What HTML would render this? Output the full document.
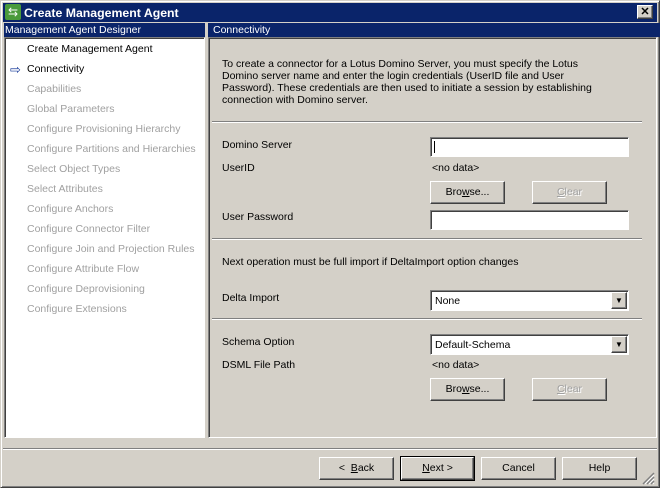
<!DOCTYPE html><html><head><style>
body{margin:0;width:660px;height:488px;background:#d4d0c8;font:10.5px "Liberation Sans",sans-serif;position:relative;overflow:hidden}
.a{position:absolute}
.hdr{background:#0a246a;color:#fff;height:14px;line-height:14px;font-size:10.5px}
.btn{position:absolute;background:#d4d0c8;border:1px solid;border-color:#fff #404040 #404040 #fff;box-shadow:inset -1px -1px #808080;text-align:center;line-height:20px;height:20px;box-sizing:border-box}
.in{position:absolute;background:#fff;border:1px solid;border-color:#808080 #fff #fff #808080;box-shadow:inset 1px 1px #404040;box-sizing:border-box}
.sep{position:absolute;height:0;border-top:1px solid #808080;border-bottom:1px solid #fff}
.li{position:absolute;left:27px;color:#a0a0a0}
.dis{color:#a0a0a0;text-shadow:1px 1px #fff}
</style></head><body>
<div class="a" style="left:0;top:0;width:660px;height:488px;box-sizing:border-box;border:1px solid;border-color:#d4d0c8 #404040 #404040 #d4d0c8;box-shadow:inset 1px 1px #fff,inset -1px -1px #808080"></div>
<div class="a" style="left:3px;top:3px;width:654px;height:19px;background:#0a246a"></div>
<div class="a" style="left:5px;top:4px;width:16px;height:16px;background:#4a9a3a;border-radius:2px;color:#fff;font-size:12px;line-height:16px;text-align:center">⇆</div>
<div class="a" style="left:24px;top:5px;color:#fff;font-weight:bold;font-size:12.3px;line-height:16px">Create Management Agent</div>
<div class="btn" style="left:637px;top:5px;width:16px;height:14px;line-height:12px;font-weight:bold;font-size:11px">✕</div>
<div class="a hdr" style="left:4px;top:23px;width:200px;padding-left:1px">Management Agent Designer</div>
<div class="a hdr" style="left:208px;top:23px;width:448px;padding-left:5px">Connectivity</div>
<div class="a" style="left:4px;top:37px;width:201px;height:401px;background:#fff;border:1px solid;border-color:#808080 #fff #fff #808080;box-shadow:inset 1px 1px #404040;box-sizing:border-box"></div>
<div class="a" style="left:27px;top:43px">Create Management Agent</div>
<div class="a" style="left:10px;top:62px;color:#1a3c9a;font-size:13px">⇨</div>
<div class="a" style="left:27px;top:63px">Connectivity</div>
<div class="li" style="top:83px">Capabilities</div>
<div class="li" style="top:103px">Global Parameters</div>
<div class="li" style="top:123px">Configure Provisioning Hierarchy</div>
<div class="li" style="top:143px">Configure Partitions and Hierarchies</div>
<div class="li" style="top:163px">Select Object Types</div>
<div class="li" style="top:183px">Select Attributes</div>
<div class="li" style="top:203px">Configure Anchors</div>
<div class="li" style="top:223px">Configure Connector Filter</div>
<div class="li" style="top:243px">Configure Join and Projection Rules</div>
<div class="li" style="top:263px">Configure Attribute Flow</div>
<div class="li" style="top:283px">Configure Deprovisioning</div>
<div class="li" style="top:303px">Configure Extensions</div>
<div class="a" style="left:208px;top:37px;width:449px;height:401px;border:1px solid;border-color:#808080 #fff #fff #808080;box-shadow:inset 1px 1px #404040;box-sizing:border-box"></div>
<div class="a" style="left:222px;top:58px;width:390px;line-height:12px">To create a connector for a Lotus Domino Server, you must specify the Lotus Domino server name and enter the login credentials (UserID file and User Password). These credentials are then used to initiate a session by establishing connection with Domino server.</div>
<div class="sep" style="left:212px;top:121px;width:430px"></div>
<div class="a" style="left:222px;top:139px">Domino Server</div>
<div class="in" style="left:430px;top:137px;width:199px;height:20px"><div class="a" style="left:3px;top:3px;width:1px;height:12px;background:#000"></div></div>
<div class="a" style="left:222px;top:162px">UserID</div>
<div class="a" style="left:432px;top:162px">&lt;no data&gt;</div>
<div class="btn" style="left:430px;top:181px;width:75px;height:23px;line-height:21px">Bro<u>w</u>se...</div>
<div class="btn dis" style="left:532px;top:181px;width:75px;height:23px;line-height:21px"><u>C</u>lear</div>
<div class="a" style="left:222px;top:211px">User Password</div>
<div class="in" style="left:430px;top:210px;width:199px;height:20px"></div>
<div class="sep" style="left:212px;top:238px;width:430px"></div>
<div class="a" style="left:222px;top:256px">Next operation must be full import if DeltaImport option changes</div>
<div class="a" style="left:222px;top:292px">Delta Import</div>
<div class="in" style="left:430px;top:290px;width:199px;height:21px;padding:4px 4px">None</div>
<div class="btn" style="left:611px;top:292px;width:16px;height:17px;font-size:8px;line-height:15px">▼</div>
<div class="sep" style="left:212px;top:318px;width:430px"></div>
<div class="a" style="left:222px;top:336px">Schema Option</div>
<div class="in" style="left:430px;top:334px;width:199px;height:21px;padding:4px 4px">Default-Schema</div>
<div class="btn" style="left:611px;top:336px;width:16px;height:17px;font-size:8px;line-height:15px">▼</div>
<div class="a" style="left:222px;top:359px">DSML File Path</div>
<div class="a" style="left:432px;top:359px">&lt;no data&gt;</div>
<div class="btn" style="left:430px;top:378px;width:75px;height:23px;line-height:21px">Bro<u>w</u>se...</div>
<div class="btn dis" style="left:532px;top:378px;width:75px;height:23px;line-height:21px"><u>C</u>lear</div>
<div class="sep" style="left:3px;top:448px;width:654px"></div>
<div class="btn" style="left:319px;top:457px;width:75px;height:23px;line-height:21px">&lt; &nbsp;<u>B</u>ack</div>
<div class="a" style="left:400px;top:456px;width:75px;height:25px;border:1px solid #000;box-sizing:border-box"></div>
<div class="btn" style="left:401px;top:457px;width:73px;height:23px;line-height:21px"><u>N</u>ext &gt;</div>
<div class="btn" style="left:481px;top:457px;width:75px;height:23px;line-height:21px">Cancel</div>
<div class="btn" style="left:562px;top:457px;width:75px;height:23px;line-height:21px">Help</div>
<svg class="a" style="left:642px;top:472px" width="13" height="13"><path d="M12 1L1 12M12 5L5 12M12 9L9 12" stroke="#808080" stroke-width="1.5"/><path d="M12 3L3 12M12 7L7 12M12 11L11 12" stroke="#fff"/></svg>
</body></html>
